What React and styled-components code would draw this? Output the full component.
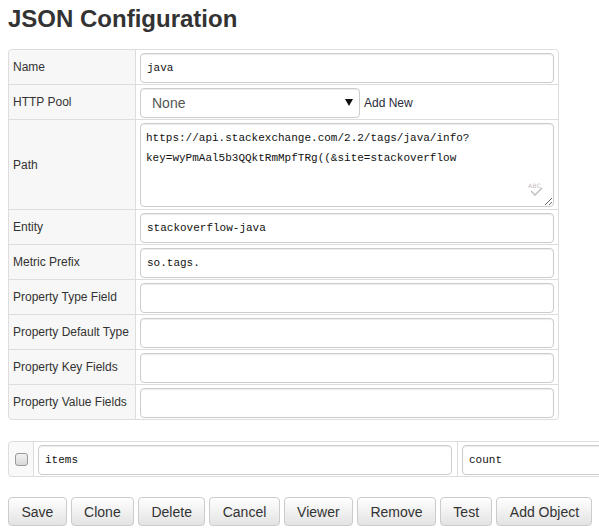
import React from "react";
import styled, { createGlobalStyle } from "styled-components";

const Global = createGlobalStyle`
  html, body { margin: 0; padding: 0; overflow: hidden; background: #fff; }
  body { font-family: "Liberation Sans", Arial, sans-serif; color: #333; }
  * { box-sizing: border-box; }
`;

const Page = styled.div`
  padding: 5px 8px 0 8px;
  width: 599px;
`;

const Title = styled.h3`
  margin: 0;
  font-size: 24px;
  line-height: 28px;
  font-weight: bold;
  color: #333;
`;

const FormGrid = styled.div`
  margin-top: 16px;
  width: 551px;
  display: grid;
  grid-template-columns: 126px 1fr;
  gap: 1px;
  background: #ddd;
  border: 1px solid #ddd;
  border-radius: 4px;
  overflow: hidden;
`;

const LabelCell = styled.div`
  background: #f7f7f7;
  height: ${(p) => (p.$tall ? 89 : 34)}px;
  display: flex;
  align-items: center;
  padding: 0 0 0 4px;
  font-size: 12px;
  color: #333;
  white-space: nowrap;
`;

const ValueCell = styled.div`
  background: #fff;
  height: ${(p) => (p.$tall ? 89 : 34)}px;
  padding: 3px 4px ${(p) => (p.$tall ? 2 : 1)}px 4px;
  display: flex;
  align-items: flex-start;
  position: relative;
`;

const TextInput = styled.input`
  width: 100%;
  height: 30px;
  border: 1px solid #ccc;
  border-radius: 4px;
  box-shadow: inset 0 1px 1px rgba(0, 0, 0, 0.075);
  padding: 0 6px;
  font-family: "Liberation Mono", "DejaVu Sans Mono", monospace;
  font-size: 11px;
  color: #111;
  outline: none;
  background: #fff;
`;

const TextArea = styled.textarea`
  width: 100%;
  height: 84px;
  border: 1px solid #ccc;
  border-radius: 4px;
  box-shadow: inset 0 1px 1px rgba(0, 0, 0, 0.075);
  padding: 4px 5px 3px;
  font-family: "Liberation Mono", "DejaVu Sans Mono", monospace;
  font-size: 11px;
  line-height: 20px;
  color: #111;
  outline: none;
  background: #fff;
  word-break: normal;
  overflow-wrap: break-word;
`;

const SpellMark = styled.div`
  position: absolute;
  right: 15px;
  bottom: 12px;
  width: 15px;
  height: 14px;
  pointer-events: none;
`;

const SpellText = styled.span`
  position: absolute;
  left: 0;
  top: 0;
  font-family: "DejaVu Sans", sans-serif;
  font-size: 6px;
  line-height: 6px;
  letter-spacing: 0.3px;
  color: #bbb;
`;

const SpellCheck = styled.svg`
  position: absolute;
  left: 2px;
  top: 3px;
`;

const PoolRow = styled.div`
  display: flex;
  align-items: center;
  gap: 4px;
`;

const SelectBox = styled.div`
  width: 220px;
  height: 30px;
  border: 1px solid #ccc;
  border-radius: 4px;
  box-shadow: inset 0 1px 1px rgba(0, 0, 0, 0.075);
  display: flex;
  align-items: center;
  justify-content: space-between;
  padding: 0 6px 1px 11px;
  font-size: 14px;
  color: #555;
  background: #fff;
`;

const Caret = styled.span`
  width: 0;
  height: 0;
  border-left: 4px solid transparent;
  border-right: 4px solid transparent;
  border-top: 7px solid #111;
`;

const AddNew = styled.span`
  font-size: 12px;
  color: #2a2a3a;
  padding-bottom: 1px;
`;

const ItemGrid = styled.div`
  margin-top: 21px;
  width: 874px;
  display: grid;
  grid-template-columns: 24px 423px 423px;
  gap: 1px;
  background: #ddd;
  border: 1px solid #ddd;
  border-radius: 4px;
  overflow: hidden;
`;

const CheckCell = styled.div`
  background: #f9f9f9;
  height: 34px;
  display: flex;
  align-items: center;
  justify-content: center;
  padding-left: 1px;
`;

const CheckBox = styled.span`
  width: 13px;
  height: 13px;
  border: 1px solid #9a9a9a;
  border-radius: 3px;
  background: linear-gradient(#f2f2f2, #d8d8d8);
`;

const ItemCell = styled.div`
  background: #fff;
  height: 34px;
  padding: 3px ${(p) => (p.$last ? 0 : 5)}px 1px 4px;
`;

const ButtonBar = styled.div`
  margin-top: 20px;
  display: flex;
  gap: 4px;
`;

const Button = styled.button`
  height: 29px;
  padding: 0 12.4px;
  border: 1px solid #ccc;
  border-radius: 4px;
  background: linear-gradient(#ffffff 0%, #e3e3e3 100%);
  box-shadow: inset 0 1px 0 rgba(255, 255, 255, 0.15), 0 1px 1px rgba(0, 0, 0, 0.05);
  font-family: "Liberation Sans", Arial, sans-serif;
  font-size: 14px;
  color: #333;
  white-space: nowrap;
  cursor: pointer;
`;

const rows = [
  { label: "Name", value: "java" },
  { label: "HTTP Pool", kind: "select" },
  {
    label: "Path",
    kind: "area",
    value:
      "https://api.stackexchange.com/2.2/tags/java/info?key=wyPmAal5b3QQktRmMpfTRg((&site=stackoverflow",
  },
  { label: "Entity", value: "stackoverflow-java" },
  { label: "Metric Prefix", value: "so.tags." },
  { label: "Property Type Field", value: "" },
  { label: "Property Default Type", value: "" },
  { label: "Property Key Fields", value: "" },
  { label: "Property Value Fields", value: "" },
];

const buttons = ["Save", "Clone", "Delete", "Cancel", "Viewer", "Remove", "Test", "Add Object"];

export default function App() {
  return (
    <Page>
      <Global />
      <Title>JSON Configuration</Title>
      <FormGrid>
        {rows.map((r) => {
          const tall = r.kind === "area";
          return (
            <React.Fragment key={r.label}>
              <LabelCell $tall={tall}>{r.label}</LabelCell>
              <ValueCell $tall={tall}>
                {r.kind === "select" ? (
                  <PoolRow>
                    <SelectBox>
                      <span>None</span>
                      <Caret />
                    </SelectBox>
                    <AddNew>Add New</AddNew>
                  </PoolRow>
                ) : r.kind === "area" ? (
                  <>
                    <TextArea defaultValue={r.value} spellCheck={false} />
                    <SpellMark>
                      <SpellText>ABC</SpellText>
                      <SpellCheck width="13" height="11" viewBox="0 0 13 11">
                        <path d="M1 5 L5 9 L12 2" fill="none" stroke="#c4c4c4" strokeWidth="1.6" />
                      </SpellCheck>
                    </SpellMark>
                  </>
                ) : (
                  <TextInput defaultValue={r.value} spellCheck={false} />
                )}
              </ValueCell>
            </React.Fragment>
          );
        })}
      </FormGrid>
      <ItemGrid>
        <CheckCell>
          <CheckBox />
        </CheckCell>
        <ItemCell>
          <TextInput defaultValue="items" spellCheck={false} />
        </ItemCell>
        <ItemCell $last>
          <TextInput defaultValue="count" spellCheck={false} />
        </ItemCell>
      </ItemGrid>
      <ButtonBar>
        {buttons.map((b) => (
          <Button key={b}>{b}</Button>
        ))}
      </ButtonBar>
    </Page>
  );
}
